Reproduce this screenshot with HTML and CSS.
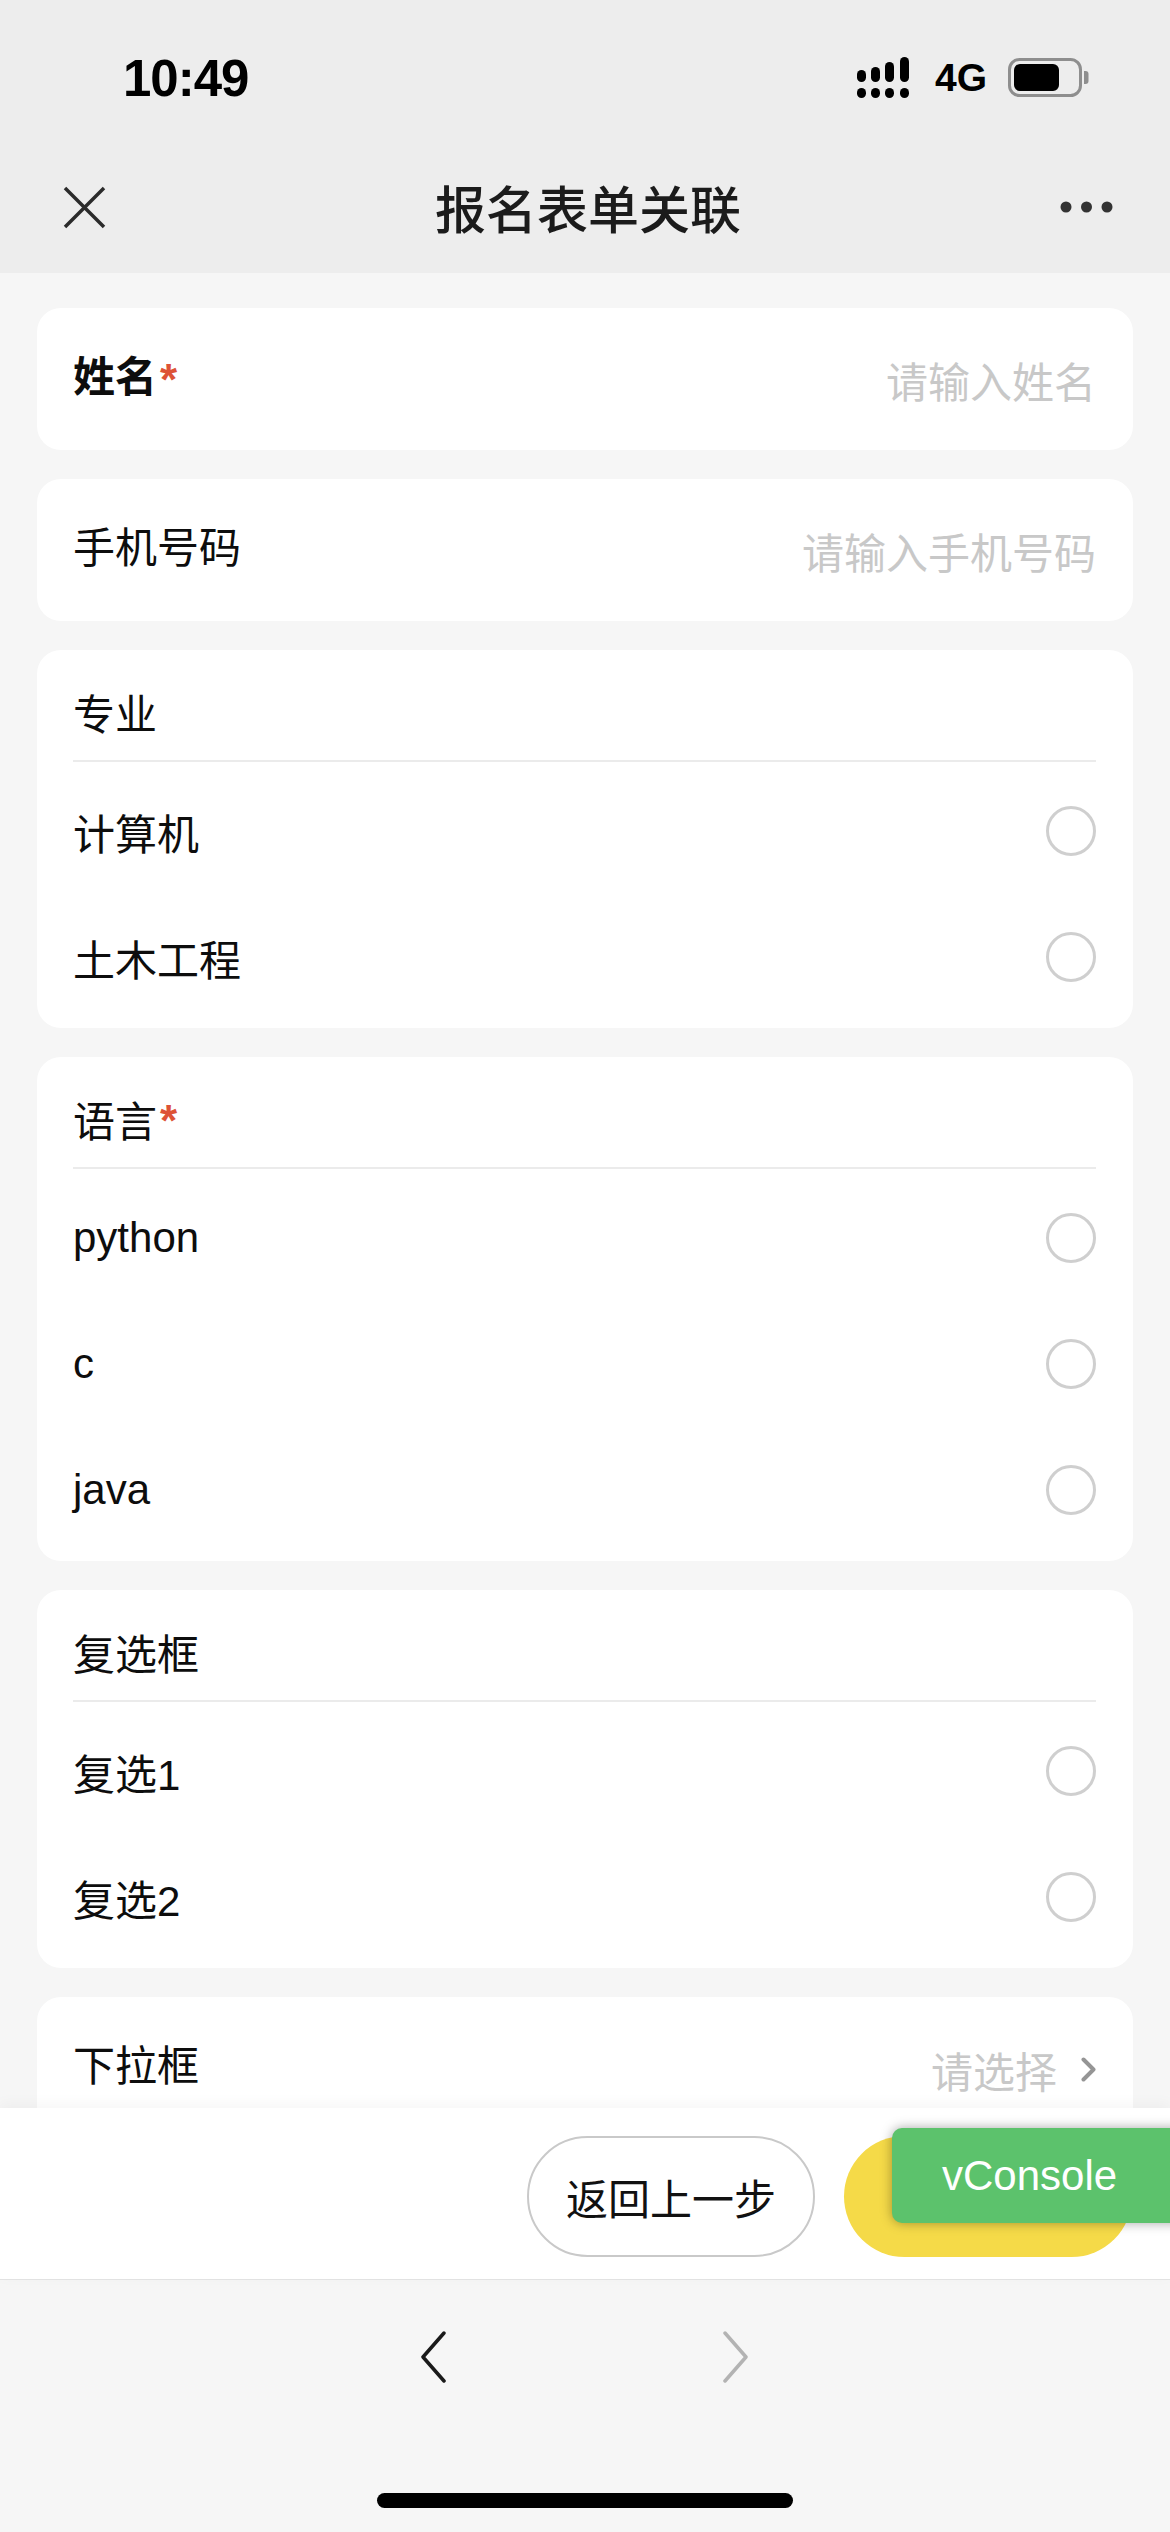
FILE: index.html
```html
<!DOCTYPE html>
<html lang="zh-CN">
<head>
  <meta charset="UTF-8" />
  <meta name="viewport" content="width=device-width, initial-scale=1.0"/>
  <title>报名表单关联</title>
  <link rel="stylesheet" href="styles.css">
</head>
<body>
  <div class="status-bar">
    <span class="time">10:49</span>
    <div class="status-icons">
      <svg class="signal" width="58" height="42" viewBox="0 0 58 42">
        <rect x="1" y="13" width="9" height="12" rx="4.5"/>
        <rect x="15" y="10" width="9" height="15" rx="4.5"/>
        <rect x="29" y="5" width="9" height="20" rx="4.5"/>
        <rect x="44" y="0" width="9" height="25" rx="4.5"/>
        <rect x="1" y="31" width="9" height="10" rx="4.5"/>
        <rect x="15" y="31" width="9" height="10" rx="4.5"/>
        <rect x="29" y="31" width="9" height="10" rx="4.5"/>
        <rect x="44" y="31" width="9" height="10" rx="4.5"/>
      </svg>
      <span class="network">4G</span>
      <svg class="battery" width="82" height="40" viewBox="0 0 82 40">
        <rect x="1.5" y="1.5" width="71" height="36" rx="10" fill="none" stroke="#8e8e8e" stroke-width="3"/>
        <rect x="6" y="6" width="45" height="27" rx="6" fill="#000"/>
        <path d="M76 13 h1.5 a3 3 0 0 1 3 3 v7 a3 3 0 0 1 -3 3 h-1.5 z" fill="#8e8e8e"/>
      </svg>
    </div>
  </div>

  <div class="nav-bar">
    <svg class="nav-close" width="43" height="43" viewBox="0 0 43 43">
      <path d="M2 2 L41 41 M41 2 L2 41" stroke="#2b2b2b" stroke-width="3.5" fill="none"/>
    </svg>
    <div class="nav-title">报名表单关联</div>
    <svg class="nav-more" width="53" height="12" viewBox="0 0 53 12">
      <circle cx="6" cy="6" r="5.5"/>
      <circle cx="26.5" cy="6" r="5.5"/>
      <circle cx="47" cy="6" r="5.5"/>
    </svg>
  </div>

  <main class="form">
    <div class="card field">
      <span class="label strong">姓名<span class="req">*</span></span>
      <span class="placeholder">请输入姓名</span>
    </div>

    <div class="card field">
      <span class="label">手机号码</span>
      <span class="placeholder">请输入手机号码</span>
    </div>

    <div class="card group">
      <div class="group-title">专业</div>
      <ul class="options">
        <li><span>计算机</span><i class="radio"></i></li>
        <li><span>土木工程</span><i class="radio"></i></li>
      </ul>
    </div>

    <div class="card group">
      <div class="group-title">语言<span class="req">*</span></div>
      <ul class="options">
        <li><span>python</span><i class="radio"></i></li>
        <li><span>c</span><i class="radio"></i></li>
        <li><span>java</span><i class="radio"></i></li>
      </ul>
    </div>

    <div class="card group">
      <div class="group-title">复选框</div>
      <ul class="options">
        <li><span>复选1</span><i class="radio"></i></li>
        <li><span>复选2</span><i class="radio"></i></li>
      </ul>
    </div>

    <div class="card field">
      <span class="label">下拉框</span>
      <span class="select">
        请选择
        <svg width="15" height="25" viewBox="0 0 15 25">
          <path d="M2.5 2.5 L12.5 12.5 L2.5 22.5" stroke="#959595" stroke-width="4" fill="none" stroke-linecap="round" stroke-linejoin="round"/>
        </svg>
      </span>
    </div>
  </main>

  <div class="action-bar">
    <button class="btn btn-back">返回上一步</button>
    <button class="btn btn-submit"></button>
  </div>

  <div class="vconsole">vConsole</div>

  <div class="browser-bar">
    <div class="browser-nav">
      <svg width="26" height="52" viewBox="0 0 26 52">
        <path d="M24 2 L3 26 L24 50" stroke="#1a1a1a" stroke-width="3.5" fill="none" stroke-linecap="round" stroke-linejoin="round"/>
      </svg>
      <svg width="26" height="52" viewBox="0 0 26 52">
        <path d="M2 2 L23 26 L2 50" stroke="#b3b3b3" stroke-width="3.5" fill="none" stroke-linecap="round" stroke-linejoin="round"/>
      </svg>
    </div>
    <div class="home-indicator"></div>
  </div>
</body>
</html>
```

FILE: styles.css
```css
* {
  box-sizing: border-box;
}

body {
  margin: 0;
  width: 1170px;
  height: 2532px;
  overflow: hidden;
  position: relative;
  display: flex;
  flex-direction: column;
  background-color: #f6f6f6;
  color: #0d0d0d;
  font-family: "Liberation Sans", "Noto Sans CJK SC", sans-serif;
}

/* status + nav */
.status-bar {
  height: 141px;
  padding: 15px 80px 0 123px;
  display: flex;
  align-items: center;
  justify-content: space-between;
  background-color: #ededed;
}

.time {
  font-size: 51px;
  font-weight: bold;
  letter-spacing: -1px;
  color: #000;
}

.status-icons {
  display: flex;
  align-items: center;
  gap: 21px;
}

.signal {
  fill: #000;
}

.network {
  font-size: 39px;
  font-weight: bold;
  color: #000;
}

.nav-bar {
  height: 132px;
  padding: 0 57px 0 63px;
  display: grid;
  grid-template-columns: 1fr auto 1fr;
  align-items: center;
  background-color: #ededed;
}

.nav-title {
  font-family: "Noto Sans CJK SC", sans-serif;
  font-size: 51px;
  font-weight: 500;
  color: #1b1b1b;
}

.nav-more {
  justify-self: end;
  fill: #333;
}

/* form */
.form {
  flex: 1;
  overflow: hidden;
  padding: 35px 37px 0;
  display: flex;
  flex-direction: column;
  gap: 29px;
}

.card {
  flex-shrink: 0;
  background-color: #fff;
  border-radius: 24px;
  padding: 0 37px 0 36px;
  font-size: 42px;
}

.field {
  height: 142px;
  display: flex;
  align-items: center;
  justify-content: space-between;
}

.label {
  margin-bottom: 12px;
}

.label.strong {
  font-weight: 600;
}

.req {
  color: #dd5236;
  font-weight: bold;
  font-size: 44px;
  margin-left: 3px;
  position: relative;
  top: 3px;
}

.placeholder,
.select {
  color: #c8c8c8;
}

.select {
  display: flex;
  align-items: center;
  gap: 24px;
  margin-top: 2px;
}

.group {
  padding-bottom: 8px;
}

.group-title {
  height: 112px;
  padding-top: 12px;
  display: flex;
  align-items: center;
  border-bottom: 2px solid #ebebeb;
}

.options {
  list-style-type: none;
  margin: 0;
  padding: 6px 0 0;
}

.options li {
  height: 126px;
  display: flex;
  align-items: center;
  justify-content: space-between;
}

.radio {
  width: 50px;
  height: 50px;
  border: 3px solid #cfcfcf;
  border-radius: 50%;
}

/* bottom actions */
.action-bar {
  height: 172px;
  flex-shrink: 0;
  padding: 28px 38px 0 0;
  display: flex;
  align-items: flex-start;
  justify-content: flex-end;
  gap: 29px;
  background-color: #fff;
  border-bottom: 1px solid #e2e2e2;
  box-shadow: 0 -4px 14px rgba(0, 0, 0, 0.04);
  position: relative;
}

.btn {
  width: 288px;
  height: 121px;
  border-radius: 61px;
  font-family: "Noto Sans CJK SC", sans-serif;
  font-size: 42px;
  color: #111;
  padding: 0;
}

.btn-back {
  background-color: #fff;
  border: 2px solid #c9c9c9;
}

.btn-submit {
  background-color: #f5da48;
  border: none;
}

.vconsole {
  position: absolute;
  top: 2128px;
  left: 892px;
  width: 300px;
  height: 95px;
  padding-left: 50px;
  display: flex;
  align-items: center;
  background-color: #5cc26c;
  color: #fff;
  font-size: 42px;
  border-radius: 10px;
  box-shadow: 0 0 12px rgba(0, 0, 0, 0.35);
}

/* browser toolbar */
.browser-bar {
  height: 252px;
  flex-shrink: 0;
  padding-top: 51px;
  display: flex;
  flex-direction: column;
  align-items: center;
  background-color: #f6f6f6;
}

.browser-nav {
  display: flex;
  gap: 277px;
  margin-left: -2px;
}

.home-indicator {
  width: 416px;
  height: 15px;
  margin-top: 110px;
  border-radius: 8px;
  background-color: #000;
}
```
